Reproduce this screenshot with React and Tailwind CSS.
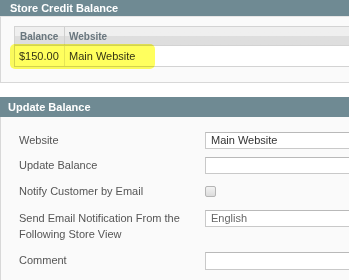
import React from "react";

function Row({ h, label, lh = "leading-[17px]", children }) {
  return (
    <div className={`flex items-start ${h}`}>
      <div className={`w-[204px] shrink-0 pl-[18px] text-[11px] text-[#555] ${lh}`}>{label}</div>
      <div className="flex-1">{children}</div>
    </div>
  );
}

function Input({ value, gray }) {
  return (
    <div
      className={`h-[17px] w-[170px] border border-[#c9c9c9] border-t-[#b9b9b9] bg-white pl-[5px] text-[11px] leading-[15px] ${
        gray ? "text-[#666]" : "text-[#333]"
      }`}
    >
      {value}
    </div>
  );
}

export default function App() {
  return (
    <div className="h-[280px] w-[349px] overflow-hidden bg-white font-['Liberation_Sans',Arial,sans-serif] text-[11px]">
      {/* Store Credit Balance */}
      <div className="flex h-[16px] items-center bg-[#6f8a93] pl-[10px] text-[11px] font-bold text-white">
        Store Credit Balance
      </div>
      <div className="h-[67px] border-b border-l border-t border-[#d8d8d8] border-t-[#e6e6e6] bg-[#fafafa] pl-[13px] pt-[9px]">
        <div className="relative">
          <div className="flex h-[20px] border-b border-l border-t border-[#d3d3d3] bg-gradient-to-b from-[#efefef] from-50% to-[#dedede] to-50% text-[10px] font-bold text-[#69767e]">
            <div className="flex w-[50px] items-center border-r border-[#cfcfcf] pl-[5px]">Balance</div>
            <div className="flex flex-1 items-center pl-[4px]">Website</div>
          </div>
          <div className="flex h-[21px] border-b border-l border-[#d3d3d3] bg-white text-[11px] text-[#333]">
            <div className="flex w-[50px] items-center border-r border-[#e6e6e6] pl-[4px]">$150.00</div>
            <div className="flex flex-1 items-center pl-[4px]">Main Website</div>
          </div>
          <div className="pointer-events-none absolute left-[-4px] top-[18px] h-[25px] w-[145px] rounded-[5px] bg-[#ffff5e] mix-blend-multiply blur-[0.6px]" />
        </div>
      </div>

      {/* Update Balance */}
      <div className="mt-[14px] flex h-[20px] items-center bg-[#6f8a93] pl-[8px] text-[11px] font-bold text-white">
        Update Balance
      </div>
      <div className="h-[200px] border-l border-[#d8d8d8] bg-[#fafafa] pt-[15px]">
        <Row h="h-[25px]" label="Website">
          <Input value="Main Website" />
        </Row>
        <Row h="h-[26px]" label="Update Balance">
          <Input value="" />
        </Row>
        <Row h="h-[27px]" label="Notify Customer by Email">
          <div className="mt-[3px] h-[11px] w-[11px] rounded-[2px] border border-[#b5b5b5] bg-gradient-to-b from-[#f2f2f2] to-[#dcdcdc]" />
        </Row>
        <Row
          h="h-[42px]"
          lh="leading-[16px]"
          label={
            <>
              Send Email Notification From the
              <br />
              Following Store View
            </>
          }
        >
          <Input value="English" gray />
        </Row>
        <Row h="h-[20px]" label="Comment">
          <div className="h-[18px] w-[170px] border border-[#c9c9c9] border-t-[#b9b9b9] bg-white" />
        </Row>
      </div>
    </div>
  );
}
